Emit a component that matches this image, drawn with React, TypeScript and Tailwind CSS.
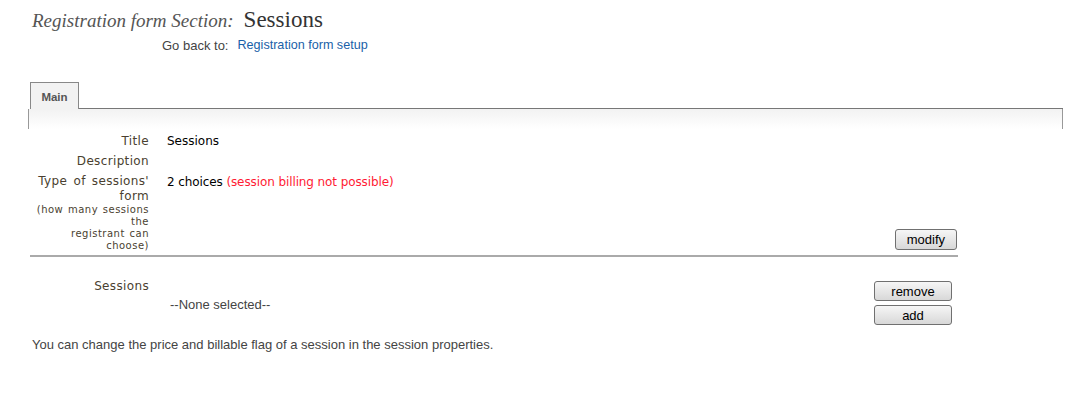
export default function App() {
  const label =
    "text-right text-[#4a3f30] pr-[18px] w-[167px] shrink-0 tracking-[0.35px] [word-spacing:2px]"
  const btn =
    "h-[20px] border border-[#707070] rounded-[3px] bg-gradient-to-b from-[#f6f6f6] to-[#d8d8d8] font-['Liberation_Sans',Arial,sans-serif] text-[13px] text-black leading-none"
  return (
    <div className="bg-white w-[1076px] h-[400px] font-['Liberation_Sans',Arial,sans-serif] text-[13px] text-[#333]">
      <div className="pt-[3px] pl-[32px] flex items-baseline gap-[10px]">
        <span className="font-['Liberation_Serif',serif] italic text-[19px] text-[#555]">Registration form Section:</span>
        <span className="font-['Liberation_Serif',serif] text-[23px] text-[#333]">Sessions</span>
      </div>
      <div className="pl-[162px] mt-[-2px] flex gap-[9px] text-[#444]">
        <span>Go back to:</span>
        <a className="text-[#1a5fa8] text-[12.6px]">Registration form setup</a>
      </div>

      <div className="mt-[26px] pl-[28px] pr-[13px]">
        <div className="flex items-end h-[28px]">
          <div className="ml-[2px] h-[27px] w-[49px] border border-b-0 border-[#888] bg-[#f2f2f2] flex items-center justify-center pt-[4px] font-bold text-[11.5px] text-[#555]">
            Main
          </div>
          <div className="flex-1 border-b border-[#777]" />
        </div>
        <div className="h-[20px] border-l border-r border-[#999] bg-gradient-to-b from-[#f2f2f2] to-white" />
      </div>

      <div className="w-[958px] font-['DejaVu_Sans',Verdana,sans-serif] text-[12px]">
        <div className="flex mt-[2px] leading-[20px]">
          <div className={label}>Title</div>
          <div className="text-black">Sessions</div>
        </div>
        <div className="flex leading-[20px]">
          <div className={label}>Description</div>
        </div>
        <div className="flex">
          <div className={label}>
            <div className="leading-[15px] mt-[3px]">
              Type of sessions'
              <br />
              form
            </div>
            <div className="text-[10px] leading-[12px] tracking-[0.5px] [word-spacing:1px] pb-[3px]">
              (how many sessions
              <br />
              the
              <br />
              registrant can
              <br />
              choose)
            </div>
          </div>
          <div className="flex-1 flex flex-col">
            <div className="leading-[20px] text-black mt-[1px] tracking-[-0.1px]">
              2 choices <span className="text-[#ff1a33]">(session billing not possible)</span>
            </div>
            <div className="mt-auto flex justify-end mb-[5px]">
              <button className={`${btn} h-[21px] px-[11px] mr-[1px]`}>modify</button>
            </div>
          </div>
        </div>
        <div className="ml-[30px] border-t-2 border-[#aaa] h-0" />
        <div className="flex mt-[20px]">
          <div className={label}>Sessions</div>
          <div className="flex-1 flex">
            <div className="flex-1 pt-[18px] pl-[3px] font-['Liberation_Sans',Arial,sans-serif] text-[13px] text-[#444]">
              --None selected--
            </div>
            <div className="flex flex-col gap-[4px] mr-[6px] mt-[4px]">
              <button className={`${btn} w-[78px]`}>remove</button>
              <button className={`${btn} w-[78px]`}>add</button>
            </div>
          </div>
        </div>
      </div>
      <div className="pl-[32px] mt-[10px] text-[#444]">
        You can change the price and billable flag of a session in the session properties.
      </div>
    </div>
  )
}
